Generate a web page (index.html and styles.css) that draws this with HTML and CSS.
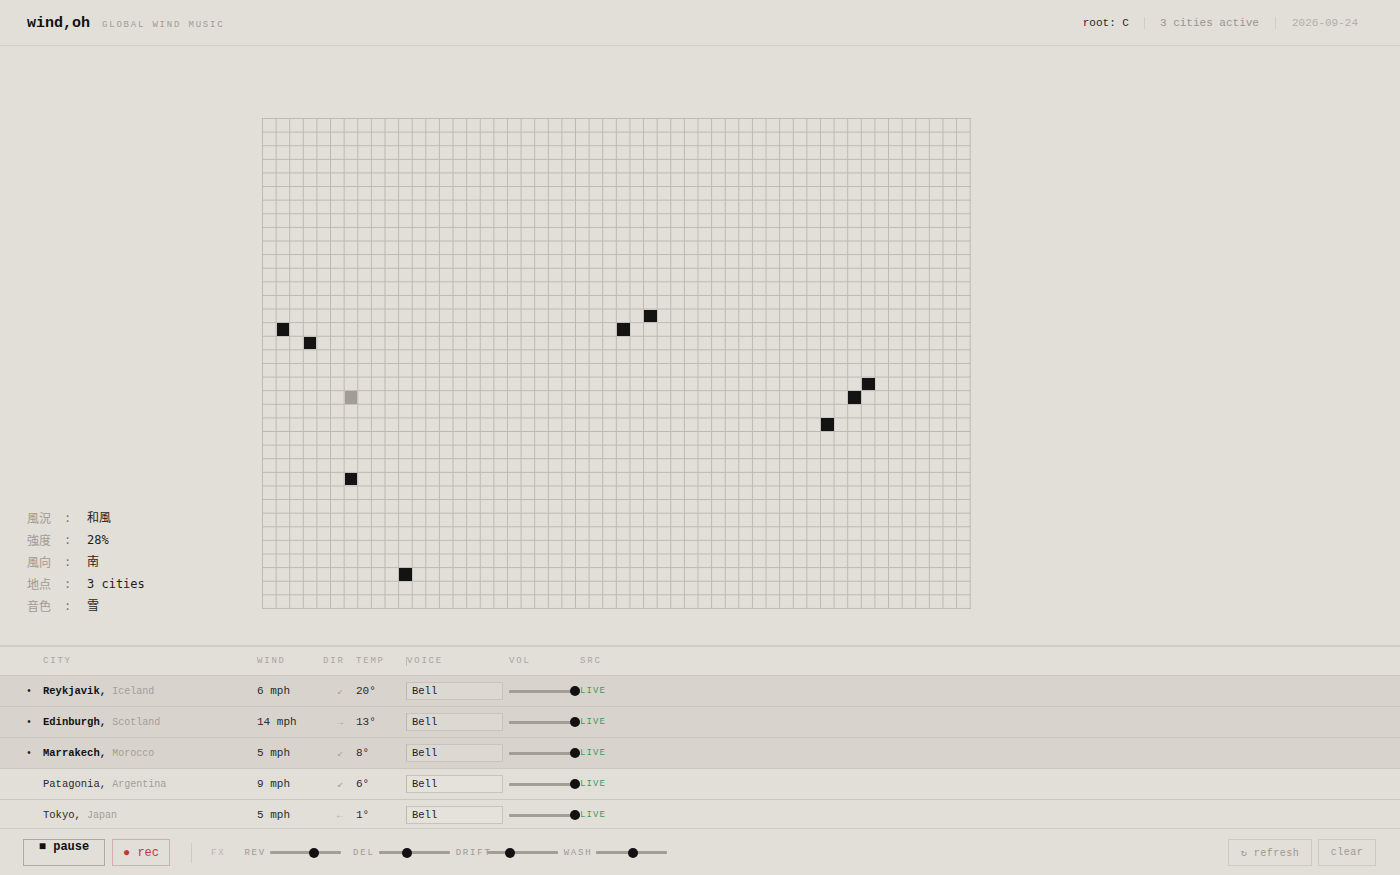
FILE: index.html
```html
<!DOCTYPE html>
<html lang="en">
<head>
<meta charset="utf-8">
<title>wind,oh — global wind music</title>
<link rel="stylesheet" href="styles.css">
</head>
<body>
<div class="app">
  <header class="topbar">
    <div class="brand">
      <span class="logo">wind,oh</span>
      <span class="tagline">GLOBAL WIND MUSIC</span>
    </div>
    <div class="status">
      <span class="status-item status-root">root: C</span>
      <span class="status-item status-sep status-count">3 cities active</span>
      <span class="status-item status-sep status-date">2026-09-24</span>
    </div>
  </header>

  <main class="stage">
    <aside class="readout">
      <dl class="readout-list">
        <dt>風況</dt><dd class="colon">:</dd><dd class="val">和風</dd>
        <dt>強度</dt><dd class="colon">:</dd><dd class="val">28%</dd>
        <dt>風向</dt><dd class="colon">:</dd><dd class="val">南</dd>
        <dt>地点</dt><dd class="colon">:</dd><dd class="val">3 cities</dd>
        <dt>音色</dt><dd class="colon">:</dd><dd class="val">雪</dd>
      </dl>
    </aside>
    <div class="board-wrap">
      <div class="board">
        <div class="note" style="grid-column:2;grid-row:16"></div>
        <div class="note" style="grid-column:4;grid-row:17"></div>
        <div class="note" style="grid-column:27;grid-row:16"></div>
        <div class="note" style="grid-column:29;grid-row:15"></div>
        <div class="note" style="grid-column:45;grid-row:20"></div>
        <div class="note" style="grid-column:44;grid-row:21"></div>
        <div class="note" style="grid-column:42;grid-row:23"></div>
        <div class="note note-ghost" style="grid-column:7;grid-row:21"></div>
        <div class="note" style="grid-column:7;grid-row:27"></div>
        <div class="note" style="grid-column:11;grid-row:34"></div>
      </div>
    </div>
  </main>

  <section class="cities">
    <div class="row row-head">
      <span class="c-mark"></span>
      <span class="c-city">CITY</span>
      <span class="c-wind">WIND</span>
      <span class="c-dir">DIR</span>
      <span class="c-temp">TEMP</span>
      <span class="c-voice c-voice-head">VOICE</span>
      <span class="c-vol">VOL</span>
      <span class="c-src">SRC</span>
    </div>

    <div class="row row-active">
      <span class="c-mark">•</span>
      <span class="c-city"><b>Reykjavik,</b> <span class="country">Iceland</span></span>
      <span class="c-wind">6 mph</span>
      <span class="c-dir">↙</span>
      <span class="c-temp">20°</span>
      <span class="c-voice"><select class="voice"><option>Bell</option></select></span>
      <span class="c-vol"><input class="slider" type="range" min="0" max="100" value="100"></span>
      <span class="c-src live">LIVE</span>
    </div>

    <div class="row row-active">
      <span class="c-mark">•</span>
      <span class="c-city"><b>Edinburgh,</b> <span class="country">Scotland</span></span>
      <span class="c-wind">14 mph</span>
      <span class="c-dir">→</span>
      <span class="c-temp">13°</span>
      <span class="c-voice"><select class="voice"><option>Bell</option></select></span>
      <span class="c-vol"><input class="slider" type="range" min="0" max="100" value="100"></span>
      <span class="c-src live">LIVE</span>
    </div>

    <div class="row row-active">
      <span class="c-mark">•</span>
      <span class="c-city"><b>Marrakech,</b> <span class="country">Morocco</span></span>
      <span class="c-wind">5 mph</span>
      <span class="c-dir">↙</span>
      <span class="c-temp">8°</span>
      <span class="c-voice"><select class="voice"><option>Bell</option></select></span>
      <span class="c-vol"><input class="slider" type="range" min="0" max="100" value="100"></span>
      <span class="c-src live">LIVE</span>
    </div>

    <div class="row">
      <span class="c-mark"></span>
      <span class="c-city">Patagonia, <span class="country">Argentina</span></span>
      <span class="c-wind">9 mph</span>
      <span class="c-dir">↙</span>
      <span class="c-temp">6°</span>
      <span class="c-voice"><select class="voice"><option>Bell</option></select></span>
      <span class="c-vol"><input class="slider" type="range" min="0" max="100" value="100"></span>
      <span class="c-src live">LIVE</span>
    </div>

    <div class="row">
      <span class="c-mark"></span>
      <span class="c-city">Tokyo, <span class="country">Japan</span></span>
      <span class="c-wind">5 mph</span>
      <span class="c-dir">←</span>
      <span class="c-temp">1°</span>
      <span class="c-voice"><select class="voice"><option>Bell</option></select></span>
      <span class="c-vol"><input class="slider" type="range" min="0" max="100" value="100"></span>
      <span class="c-src live">LIVE</span>
    </div>
  </section>

  <footer class="transport">
    <div class="transport-left">
      <button class="btn btn-pause" type="button">■ pause</button>
      <button class="btn btn-rec" type="button">● rec</button>
      <span class="divider"></span>
      <span class="fx-title">FX</span>
      <div class="fx">
        <label class="fx-group"><span class="fx-label">REV</span><input class="slider" type="range" min="0" max="100" value="64"></label>
        <label class="fx-group fx-group-wide"><span class="fx-label">DEL</span><input class="slider" type="range" min="0" max="100" value="38"></label>
        <label class="fx-group"><span class="fx-label fx-label-tight">DRIFT</span><input class="slider" type="range" min="0" max="100" value="30"></label>
        <label class="fx-group"><span class="fx-label">WASH</span><input class="slider" type="range" min="0" max="100" value="51"></label>
      </div>
    </div>
    <div class="transport-right">
      <button class="btn btn-ghost btn-refresh" type="button">↻ refresh</button>
      <button class="btn btn-ghost btn-clear" type="button">clear</button>
    </div>
  </footer>
</div>
</body>
</html>
```

FILE: styles.css
```css
* {
  box-sizing: border-box;
}

html,
body {
  margin: 0;
  padding: 0;
  background: #e2ded8;
}

body {
  font-family: "Liberation Mono", "DejaVu Sans Mono", monospace;
  color: #222;
}

.app {
  display: flex;
  flex-direction: column;
  width: 1400px;
  height: 875px;
  overflow: hidden;
}

/* ---------- top bar ---------- */
.topbar {
  flex: none;
  height: 46px;
  border-bottom: 1px solid #d3cec7;
  padding: 0 27px;
  display: flex;
  align-items: center;
  justify-content: space-between;
}

.brand {
  display: flex;
  align-items: baseline;
  gap: 12px;
  padding-top: 1px;
}

.logo {
  font-size: 15px;
  font-weight: bold;
  color: #111;
}

.tagline {
  font-size: 9px;
  letter-spacing: 0.2em;
  color: #a19c96;
}

.status {
  display: flex;
  align-items: center;
}

.status-item {
  font-size: 11px;
  line-height: 12px;
  padding: 0 16px;
  color: #9a958f;
}

.status-root {
  color: #2a2a2a;
  padding-right: 15px;
}

.status-sep {
  border-left: 1px solid #d2cdc6;
}

.status-count {
  padding-left: 15px;
}

.status-date {
  color: #b4afa8;
  padding-right: 15px;
}

/* ---------- stage ---------- */
.stage {
  flex: 1;
  display: flex;
  padding-left: 27px;
}

.readout {
  width: 235px;
  display: flex;
  flex-direction: column;
  justify-content: flex-end;
  padding-bottom: 28px;
}

.readout-list {
  margin: 0;
  display: grid;
  grid-template-columns: 37px 23px auto;
  font-size: 12px;
  line-height: 22px;
}

.readout-list dt {
  font-family: "Noto Sans CJK JP", sans-serif;
  color: #a09b95;
}

.readout-list dd {
  margin: 0;
}

.readout-list .colon {
  color: #777;
  font-family: "DejaVu Sans Mono", monospace;
}

.readout-list .val {
  font-family: "DejaVu Sans Mono", "Noto Sans CJK JP", monospace;
  color: #1e1e1e;
}

.board-wrap {
  padding-top: 72px;
}

.board {
  width: 709px;
  height: 491px;
  padding: 0 1px 1px 0;
  display: grid;
  grid-template-columns: repeat(52, 1fr);
  grid-template-rows: repeat(36, 1fr);
  background-image:
    linear-gradient(to right, #bdb8b1 1px, transparent 1px),
    linear-gradient(to bottom, #bdb8b1 1px, transparent 1px);
  background-size: calc(708px / 52) calc(490px / 36);
  background-origin: border-box;
}

.note {
  margin: 1px 0 0 1px;
  background: #131313;
}

.note-ghost {
  background: #a29d97;
}

/* ---------- city table ---------- */
.cities {
  flex: none;
  height: 183px;
  overflow: hidden;
  border-top: 2px solid #d0cbc4;
}

.row {
  display: grid;
  grid-template-columns: 43px 214px 66px 33px 50px 103px 71px auto;
  align-items: center;
  height: 31px;
  border-bottom: 1px solid #cbc6bf;
  font-size: 11px;
  color: #2b2b2b;
}

.row-head {
  height: 29px;
  font-size: 9px;
  letter-spacing: 0.2em;
  color: #aaa59f;
}

.row-active {
  background: #d8d4cd;
}

.c-mark {
  text-align: right;
  padding-right: 11px;
  color: #222;
  font-size: 10px;
}

.row .c-city {
  font-size: 10.5px;
}

.row-head .c-city {
  font-size: 9px;
}

.c-city b {
  color: #111;
}

.country {
  font-size: 10px;
  color: #a39e98;
}

.c-dir {
  text-align: right;
  padding-right: 13px;
  color: #aaa59f;
  font-size: 10px;
}

.row-head .c-dir {
  padding-right: 12px;
  color: #aaa59f;
  font-size: 9px;
}

.c-voice-head {
  border-left: 1px solid #c2bdb6;
  line-height: 9px;
}

.voice {
  -webkit-appearance: none;
  appearance: none;
  display: block;
  width: 97px;
  height: 18px;
  padding: 0 0 0 5px;
  margin: 0;
  border: 1px solid #c8c3bc;
  border-left-color: #bdb8b1;
  border-radius: 0;
  background: rgba(255, 255, 255, 0.12);
  font-family: "Liberation Mono", "DejaVu Sans Mono", monospace;
  font-size: 10.5px;
  color: #1e1e1e;
}

.c-vol {
  display: flex;
  align-items: center;
}

.live {
  font-size: 9px;
  letter-spacing: 0.12em;
  color: #3f9a5e;
}

/* ---------- sliders ---------- */
.slider {
  -webkit-appearance: none;
  appearance: none;
  display: block;
  width: 71px;
  height: 10px;
  margin: 0;
  padding: 0;
  background: transparent;
}

.slider::-webkit-slider-runnable-track {
  height: 3px;
  background: #a29d96;
  border-radius: 1px;
}

.slider::-webkit-slider-thumb {
  -webkit-appearance: none;
  appearance: none;
  width: 10px;
  height: 10px;
  margin-top: -3.5px;
  border: none;
  border-radius: 50%;
  background: #111;
}

/* ---------- transport ---------- */
.transport {
  flex: none;
  height: 47px;
  border-top: 1px solid #d0cbc4;
  padding: 10px 24px 0 23px;
  display: flex;
  justify-content: space-between;
  align-items: flex-start;
}

.transport-left,
.transport-right {
  display: flex;
  align-items: center;
}

.btn {
  height: 27px;
  margin: 0;
  background: transparent;
  font-family: "Liberation Mono", "DejaVu Sans Mono", monospace;
  border-radius: 0;
  cursor: pointer;
}

.btn-pause {
  width: 82px;
  padding: 0 0 12px;
  border: 1px solid #aea9a2;
  font-size: 12px;
  font-weight: bold;
  line-height: 14px;
  color: #111;
}

.btn-rec {
  width: 58px;
  margin-left: 7px;
  padding: 0;
  border: 1px solid #d9aca8;
  font-size: 12px;
  color: #c23a33;
}

.divider {
  width: 1px;
  height: 20px;
  margin: 0 19px 0 21px;
  background: #cfcac3;
}

.fx-title {
  font-size: 9px;
  letter-spacing: 0.2em;
  color: #bcb7b0;
  margin-right: 19px;
}

.fx {
  display: flex;
  align-items: center;
  gap: 6px;
}

.fx-group {
  display: flex;
  align-items: center;
  gap: 4px;
}

.fx-group-wide {
  margin-left: 6px;
}

.fx-label {
  font-size: 9px;
  letter-spacing: 0.2em;
  color: #9f9a94;
}

.fx-label-tight {
  margin-right: -9px;
}

.btn-ghost {
  padding: 0;
  border: 1px solid #cfcac3;
  font-size: 10px;
  letter-spacing: 0.05em;
  color: #9d9892;
}

.btn-refresh {
  width: 84px;
}

.btn-clear {
  width: 58px;
  margin-left: 6px;
}
```
